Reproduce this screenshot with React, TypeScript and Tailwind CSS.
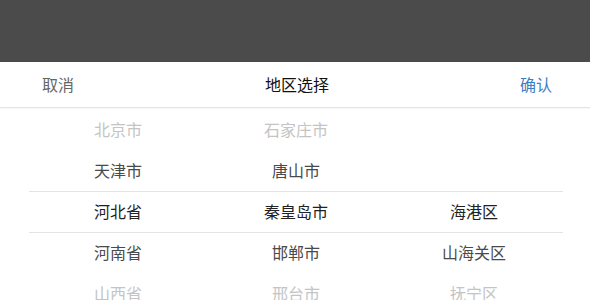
const provinces = ["北京市", "天津市", "河北省", "河南省", "山西省"];
const cities = ["石家庄市", "唐山市", "秦皇岛市", "邯郸市", "邢台市"];
const districts = ["", "", "海港区", "山海关区", "抚宁区"];

const rowColor = [
  "text-[#c4c4c4]",
  "text-[#4a4a4a]",
  "text-[#222222]",
  "text-[#4a4a4a]",
  "text-[#c4c4c4]",
];

function Column({ items }: { items: string[] }) {
  return (
    <div className="flex flex-col">
      {items.map((item, i) => (
        <div
          key={i}
          className={`h-[41px] flex items-center justify-center text-[16px] ${rowColor[i]}`}
        >
          {item}
        </div>
      ))}
    </div>
  );
}

export default function App() {
  return (
    <div
      className="w-[590px] h-[300px] flex flex-col bg-[#4b4b4b] overflow-hidden"
      style={{ fontFamily: '"Noto Sans CJK SC", "Noto Sans", sans-serif' }}
    >
      {/* Overlay */}
      <div className="h-[62px] shrink-0" />

      {/* Sheet */}
      <div className="flex-1 bg-white flex flex-col">
        <header className="h-[46px] shrink-0 flex items-center justify-between pl-[42px] pr-[38px] pb-[2px] border-b border-[#e3e3e3] shadow-[0_1px_2px_rgba(0,0,0,0.04)]">
          <span className="text-[16px] text-[#666666]">取消</span>
          <span className="text-[16px] text-[#111111]">地区选择</span>
          <span className="text-[16px] text-[#3b7dc4]">确认</span>
        </header>

        <div className="relative ml-[29px] mr-[27px]">
          <div className="grid grid-cols-3">
            <Column items={provinces} />
            <Column items={cities} />
            <Column items={districts} />
          </div>
          {/* selection lines */}
          <div className="absolute left-0 right-0 top-[83px] h-[42px] border-y border-[#e4e4e4] pointer-events-none" />
        </div>
      </div>
    </div>
  );
}
